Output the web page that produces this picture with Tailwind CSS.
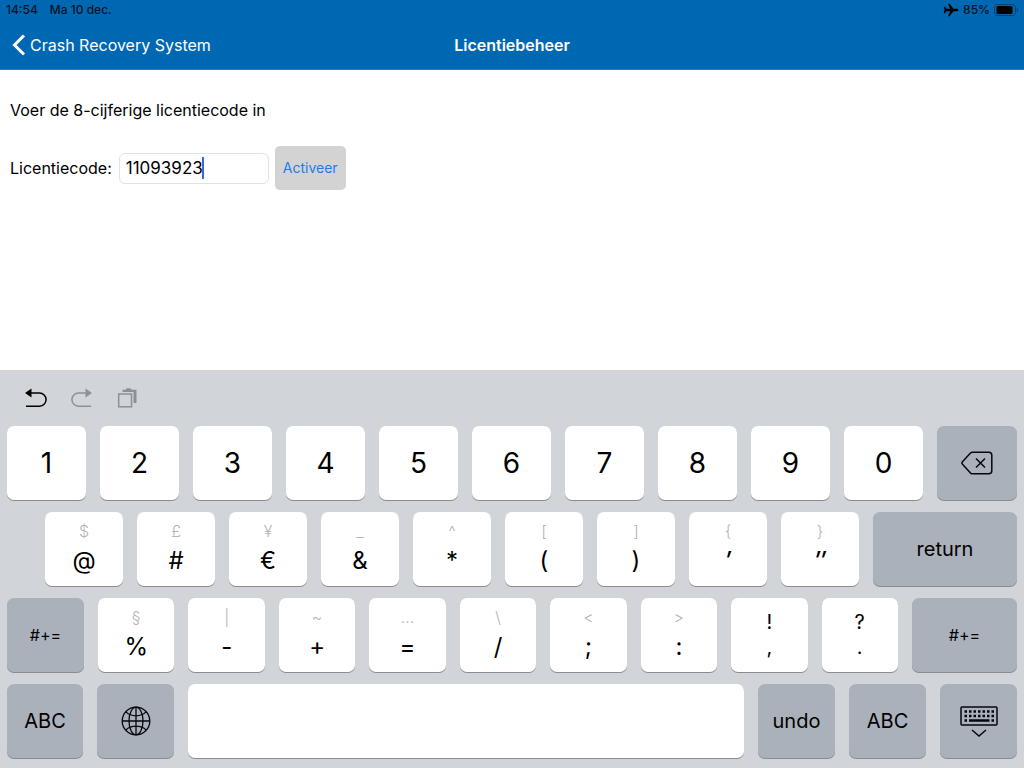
<!DOCTYPE html>
<html lang="nl">
<head>
<meta charset="utf-8">
<meta name="viewport" content="width=device-width, initial-scale=1">
<title>Licentiebeheer</title>
<script src="https://cdn.jsdelivr.net/npm/@tailwindcss/browser@4"></script>
</head>
<body class="flex min-h-screen flex-col bg-white font-['Inter','Liberation_Sans',sans-serif] text-black">

<header class="border-b border-[#2f7fc0] bg-[#0068b3]">
  <div class="flex h-5 items-center justify-between pl-1.5 pr-1.5 text-xs font-medium text-[#03111f]">
    <div class="flex gap-3"><span>14:54</span><span>Ma 10 dec.</span></div>
    <div class="flex items-center gap-1">
      <svg class="h-4 w-4" viewBox="0 0 16 14" fill="#000" aria-label="Vliegtuigmodus"><path d="M15.500 7c0 .7-.9 1.200-2 1.200h-3L6.600 13.200H5.100L7 8.200H3.600L2 10.200H.7L1.500 7 .7 3.800H2l1.600 2H7L5.100.8h1.500l3.900 5h3c1.100 0 2 .5 2 1.200z"/></svg>
      <span>85%</span>
      <svg class="h-3 w-6" viewBox="0 0 24 12" aria-label="Batterij"><rect x=".5" y=".5" width="21" height="11" rx="3" fill="none" stroke="#03406f"/><rect x="2.500" y="2" width="16" height="8" rx="1.500" fill="#000"/><path d="M22.800 4v4c.7-.4 1.200-1.200 1.200-2s-.5-1.600-1.200-2z" fill="#03406f"/></svg>
    </div>
  </div>
  <nav class="grid h-[49px] grid-cols-3 items-center px-3 text-base text-white">
    <a href="#" class="flex items-center gap-1 whitespace-nowrap">
      <svg class="h-[22px] w-[14px]" viewBox="0 0 14 22" fill="none" stroke="currentColor" stroke-width="3" aria-hidden="true"><path d="M12 1.500 2.500 11l9.500 9.500"/></svg>
      Crash Recovery System
    </a>
    <h1 class="text-center font-semibold">Licentiebeheer</h1>
  </nav>
</header>

<main class="flex-1 px-2.5 pt-7">
  <p class="text-base leading-6">Voer de 8-cijferige licentiecode in</p>
  <form class="mt-6 flex items-center gap-1.5" onsubmit="return false">
    <label for="code" class="pr-px text-base">Licentiecode:</label>
    <div class="relative">
      <input id="code" type="text" inputmode="numeric" value="11093923" class="block h-[31px] w-[150px] rounded-md border border-[#e2e2e2] bg-white px-1.5 text-[17px] outline-none">
      <span class="absolute left-[83px] top-1 h-[22px] w-0.5 bg-[#3b66e0]"></span>
    </div>
    <button type="submit" class="h-11 rounded-[5px] bg-[#d3d3d3] px-2 text-sm text-[#1f7cea]">Activeer</button>
  </form>
</main>

<section aria-label="Toetsenbord" class="bg-[#d1d4d9] px-[7px] pb-2.5">
  <div class="flex h-14 items-center gap-6 px-[18px]">
    <button aria-label="Herstel"><svg class="h-[22px] w-[22px]" viewBox="0 0 22 22" fill="none" stroke="#000" stroke-width="1.500"><path d="M6 6h8.500a6.600 6.600 0 0 1 0 13.200H1"/><path d="M0 6 6.500 1.500v9z" fill="#000" stroke="none"/></svg></button>
    <button aria-label="Opnieuw"><svg class="h-[22px] w-[22px]" viewBox="0 0 22 22" fill="none" stroke="#8d9096" stroke-width="1.500"><path d="M16 6H7.500a6.600 6.600 0 0 0 0 13.200H20"/><path d="M21 6 14.500 1.500v9z" fill="#8d9096" stroke="none"/></svg></button>
    <button aria-label="Plak"><svg class="h-[22px] w-[22px]" viewBox="0 0 22 22" fill="none" stroke="#8d9096"><rect x="1.700" y="7" width="12.800" height="12.800" stroke-width="1.500"/><path d="M5.500 5V2.800h3C8.700 1.600 10 1.200 11.500 1.200s2.800.4 3 1.600h5V16h-3V5z" fill="#8d9096" stroke="none"/></svg></button>
  </div>

  <div class="flex flex-col gap-3">
    <div class="flex gap-3.5 text-[28px] [&>button]:h-[74px] [&>button]:rounded-[7px] [&>button]:shadow-[0_1px_0_#898c91]">
      <button class="flex-1 bg-white">1</button><button class="flex-1 bg-white">2</button><button class="flex-1 bg-white">3</button><button class="flex-1 bg-white">4</button><button class="flex-1 bg-white">5</button><button class="flex-1 bg-white">6</button><button class="flex-1 bg-white">7</button><button class="flex-1 bg-white">8</button><button class="flex-1 bg-white">9</button><button class="flex-1 bg-white">0</button>
      <button class="flex w-20 items-center justify-center bg-[#abb1bb]" aria-label="Wis"><svg class="h-6 w-8" viewBox="0 0 32 24" fill="none" stroke="#05070c" stroke-width="1.500"><path d="M11.500 1.200h16.300a3 3 0 0 1 3 3v15.600a3 3 0 0 1-3 3H11.500c-.8 0-1.500-.3-2-.9L1.500 13.200a1.700 1.700 0 0 1 0-2.400l8-8.700c.5-.6 1.200-.9 2-.9z"/><path d="m15 7.500 9 9m0-9-9 9"/></svg></button>
    </div>

    <div class="flex gap-3.5 pl-[38px] text-2xl [&>button]:h-[74px] [&>button]:rounded-[7px] [&>button]:shadow-[0_1px_0_#898c91] [&_span]:block [&_span]:leading-8 [&_small]:block [&_small]:text-base [&_small]:leading-7 [&_small]:font-light [&_small]:text-[#b4b4b6] [&_small]:-mt-1">
      <button class="flex-1 bg-white"><small>$</small><span>@</span></button>
      <button class="flex-1 bg-white"><small>£</small><span>#</span></button>
      <button class="flex-1 bg-white"><small>¥</small><span>€</span></button>
      <button class="flex-1 bg-white"><small>_</small><span>&amp;</span></button>
      <button class="flex-1 bg-white"><small>^</small><span>*</span></button>
      <button class="flex-1 bg-white"><small>[</small><span>(</span></button>
      <button class="flex-1 bg-white"><small>]</small><span>)</span></button>
      <button class="flex-1 bg-white"><small>{</small><span class="font-medium italic">′</span></button>
      <button class="flex-1 bg-white"><small>}</small><span class="font-medium italic">″</span></button>
      <button class="w-36 bg-[#abb1bb] text-xl">return</button>
    </div>

    <div class="flex gap-3.5 text-2xl [&>button]:h-[74px] [&>button]:rounded-[7px] [&>button]:shadow-[0_1px_0_#898c91] [&_span]:block [&_span]:leading-8 [&_small]:block [&_small]:text-base [&_small]:leading-7 [&_small]:font-light [&_small]:text-[#b4b4b6] [&_small]:-mt-1">
      <button class="w-[77px] bg-[#abb1bb] text-base">#+=</button>
      <button class="flex-1 bg-white"><small>§</small><span>%</span></button>
      <button class="flex-1 bg-white"><small>|</small><span>-</span></button>
      <button class="flex-1 bg-white"><small>~</small><span>+</span></button>
      <button class="flex-1 bg-white"><small>…</small><span>=</span></button>
      <button class="flex-1 bg-white"><small>\</small><span>/</span></button>
      <button class="flex-1 bg-white"><small>&lt;</small><span>;</span></button>
      <button class="flex-1 bg-white"><small>&gt;</small><span>:</span></button>
      <button class="flex flex-1 flex-col items-center justify-center bg-white text-xl"><b class="font-normal leading-[25px]">!</b><b class="font-normal leading-[25px]">,</b></button>
      <button class="flex flex-1 flex-col items-center justify-center bg-white text-xl"><b class="font-normal leading-[25px]">?</b><b class="font-normal leading-[25px]">.</b></button>
      <button class="w-[105px] bg-[#abb1bb] text-base">#+=</button>
    </div>

    <div class="flex gap-3.5 text-xl [&>button]:h-[74px] [&>button]:rounded-[7px] [&>button]:shadow-[0_1px_0_#898c91]">
      <button class="w-[76px] bg-[#abb1bb]">ABC</button>
      <button class="flex w-[77px] items-center justify-center bg-[#abb1bb]" aria-label="Volgend toetsenbord"><svg class="h-[30px] w-[30px]" viewBox="0 0 30 30" fill="none" stroke="#05070c" stroke-width="1.300"><circle cx="15" cy="15" r="13.800"/><ellipse cx="15" cy="15" rx="7" ry="13.800"/><path d="M15 1.200v27.600M1.200 15h27.600M4.800 5.900c2.500 2.500 6 3.900 10.200 3.900s7.700-1.400 10.200-3.900M4.800 24.100c2.500-2.500 6-3.900 10.200-3.900s7.700 1.400 10.200 3.900"/></svg></button>
      <button class="flex-1 bg-white" aria-label="Spatie"></button>
      <button class="w-[77px] bg-[#abb1bb]">undo</button>
      <button class="w-[77px] bg-[#abb1bb]">ABC</button>
      <button class="flex w-[77px] items-center justify-center bg-[#abb1bb]" aria-label="Verberg toetsenbord"><svg class="h-8 w-[38px]" viewBox="0 0 38 32" fill="none" stroke="#05070c"><rect x="1" y="2" width="36" height="18" rx="1" stroke-width="1.500"/><path d="M4.500 6.500h29.500M4.500 11h29.500" stroke-width="2.400" stroke-dasharray="2.500 2"/><path d="M4.500 15.500h2.500M9 15.500h20.500M31.500 15.500h2.500" stroke-width="2.400"/><path d="m12 25 7 6 7-6" stroke-width="1.500"/></svg></button>
    </div>
  </div>
</section>
</body>
</html>
